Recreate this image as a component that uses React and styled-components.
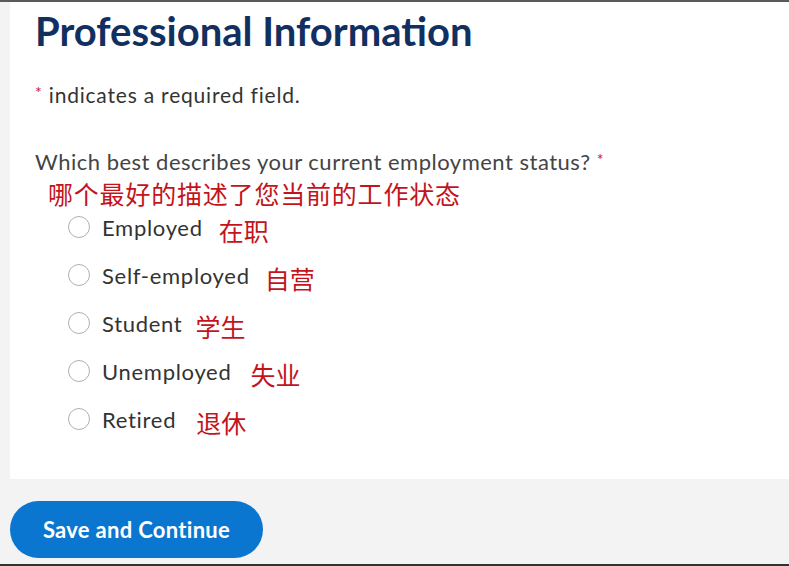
import React from 'react'
import styled, { createGlobalStyle } from 'styled-components'

const GlobalStyle = createGlobalStyle`
  html, body {
    margin: 0;
    padding: 0;
    background: #f3f3f3;
  }
  body {
    font-family: Lato, "Noto Sans", sans-serif;
  }
`

const Page = styled.div`
  width: 789px;
  height: 566px;
  box-sizing: border-box;
  border-top: 2px solid #5a5a5a;
  border-bottom: 2px solid #333;
  background: #f3f3f3;
  overflow: hidden;
  display: flex;
  flex-direction: column;
  padding-left: 10px;
`

const Card = styled.section`
  background: #fff;
  height: 477px;
  box-sizing: border-box;
  padding: 5px 0 0 25px;
`

const Title = styled.h1`
  margin: 0;
  font-family: Lato, sans-serif;
  font-weight: 700;
  font-size: 40px;
  line-height: 48px;
  color: #12305f;
`

const Note = styled.p`
  margin: 23px 0 0;
  font-size: 21px;
  line-height: 28px;
  letter-spacing: 0.8px;
  color: #333;
`

const Star = styled.span`
  color: #c8102e;
  font-size: 16px;
  vertical-align: 5px;
`

const Question = styled.p`
  margin: 35px 0 0;
  font-size: 22px;
  line-height: 30px;
  letter-spacing: 0.5px;
  color: #444;
`

const Annotation = styled.span`
  font-family: "Noto Sans CJK SC", sans-serif;
  font-size: 25px;
  color: #c3141c;
  margin-left: ${p => p.$gap || 0}px;
  position: relative;
  top: 3px;
  letter-spacing: 0;
`

const QuestionCn = styled.div`
  font-family: "Noto Sans CJK SC", sans-serif;
  font-size: 25px;
  line-height: 32px;
  letter-spacing: 0.8px;
  color: #c3141c;
  margin-left: 13px;
`

const Options = styled.div`
  display: flex;
  flex-direction: column;
  gap: 22px;
  margin: 5px 0 0 33px;
`

const Option = styled.label`
  display: flex;
  align-items: center;
  height: 26px;
  font-size: 22px;
  color: #333;
  letter-spacing: 0.7px;
`

const Radio = styled.span`
  width: 20px;
  height: 20px;
  border-radius: 50%;
  border: 1.5px solid #b0b0b0;
  background: #fff;
  margin-right: 12px;
  flex: none;
`

const Footer = styled.div`
  padding-top: 22px;
`

const Button = styled.button`
  width: 253px;
  height: 57px;
  border: none;
  border-radius: 29px;
  background: #0a76cf;
  color: #fff;
  font-family: Lato, sans-serif;
  font-weight: 700;
  font-size: 22px;
  letter-spacing: 0.3px;
  cursor: pointer;
`

const options = [
  ['Employed', '在职', 16],
  ['Self-employed', '自营', 15],
  ['Student', '学生', 13],
  ['Unemployed', '失业', 19],
  ['Retired', '退休', 20],
]

export default function App() {
  return (
    <Page>
      <GlobalStyle />
      <Card>
        <Title>Professional Information</Title>
        <Note><Star>*</Star> indicates a required field.</Note>
        <Question>Which best describes your current employment status? <Star>*</Star></Question>
        <QuestionCn>哪个最好的描述了您当前的工作状态</QuestionCn>
        <Options>
          {options.map(([en, cn, gap]) => (
            <Option key={en}>
              <Radio />
              {en}
              <Annotation $gap={gap}>{cn}</Annotation>
            </Option>
          ))}
        </Options>
      </Card>
      <Footer>
        <Button>Save and Continue</Button>
      </Footer>
    </Page>
  )
}
